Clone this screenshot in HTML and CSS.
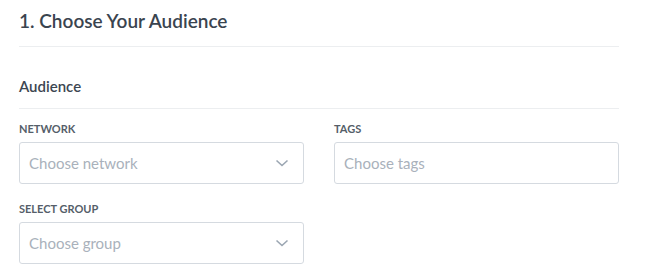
FILE: index.html
```html
<!DOCTYPE html>
<html>
<head>
  <meta charset="UTF-8">
  <link rel="stylesheet" href="styles.css">
</head>
<body>
  <div class="panel">
    <h2 class="panel-title">1. Choose Your Audience</h2>
    <h3 class="section-title">Audience</h3>
    <div class="field-grid">
      <div class="field">
        <label class="field-label">Network</label>
        <div class="select">
          <span class="placeholder">Choose network</span>
          <svg class="chevron" width="14" height="8" viewBox="0 0 14 8"><path d="M1.5 1.5l5.5 5 5.5-5" fill="none" stroke="#9ba6b2" stroke-width="1.6"/></svg>
        </div>
      </div>
      <div class="field">
        <label class="field-label">Tags</label>
        <div class="select">
          <span class="placeholder">Choose tags</span>
        </div>
      </div>
      <div class="field">
        <label class="field-label">Select group</label>
        <div class="select">
          <span class="placeholder">Choose group</span>
          <svg class="chevron" width="14" height="8" viewBox="0 0 14 8"><path d="M1.5 1.5l5.5 5 5.5-5" fill="none" stroke="#9ba6b2" stroke-width="1.6"/></svg>
        </div>
      </div>
    </div>
  </div>
</body>
</html>
```

FILE: styles.css
```css
body {
  margin: 0;
  background: #fff;
  font-family: Lato, "Open Sans", sans-serif;
}

.panel {
  width: 600px;
  padding-left: 19px;
}

.panel-title {
  margin: 0;
  padding: 9px 0 13px;
  font-size: 19px;
  font-weight: 600;
  color: #3a444f;
  line-height: 24px;
  border-bottom: 1px solid #eceef0;
}

.section-title {
  margin: 0;
  padding: 29px 0 12px;
  font-size: 15px;
  font-weight: 600;
  color: #3c4651;
  line-height: 20px;
  border-bottom: 1px solid #eceef0;
}

.field-grid {
  display: grid;
  grid-template-columns: 1fr 1fr;
  column-gap: 30px;
  row-gap: 18px;
  padding-top: 13px;
}

.field-label {
  display: block;
  font-size: 11px;
  font-weight: 700;
  text-transform: uppercase;
  color: #555e69;
  line-height: 14px;
  margin-bottom: 6px;
}

.select {
  height: 40px;
  border: 1px solid #d5dae0;
  border-radius: 3px;
  display: flex;
  align-items: center;
  justify-content: space-between;
  padding: 0 14px 0 9px;
}

.placeholder {
  font-size: 15px;
  color: #a9b1bb;
}

.chevron {
  display: block;
}
```
